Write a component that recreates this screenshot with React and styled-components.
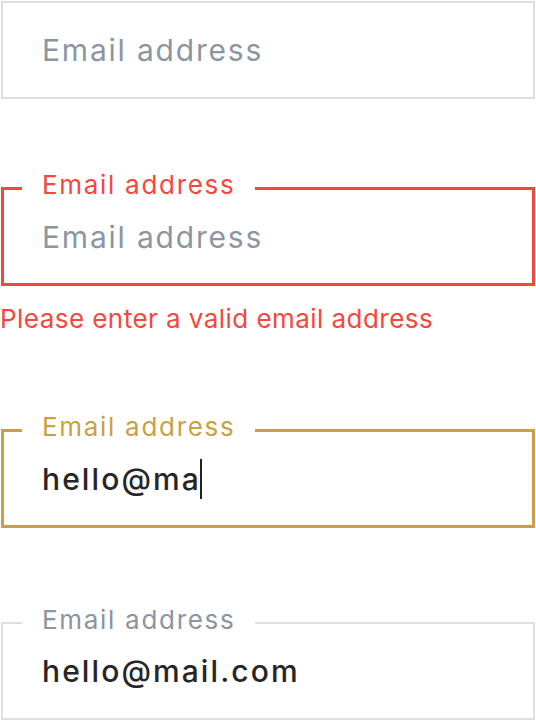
import React from 'react'
import styled, { createGlobalStyle } from 'styled-components'

const GlobalStyle = createGlobalStyle`
  html, body {
    margin: 0;
    padding: 0;
    background: #fff;
  }
  body {
    font-family: Inter, "Open Sans", sans-serif;
    -webkit-font-smoothing: antialiased;
  }
`

// border / label colours for each state of the field
const tones = {
  idle: { border: '#dedede', width: 2, label: '#8b94a1' },
  error: { border: '#f5483d', width: 3, label: '#f5483d' },
  focus: { border: '#c9a042', width: 3, label: '#c9a042' },
}

const EmailField = ({ tone = 'idle', label, value, placeholder, caret, top }) => (
  <Box $tone={tone} $top={top}>
    {label && <Label $tone={tone}>{label}</Label>}
    {value ? (
      <Value>
        {value}
        {caret && <Caret />}
      </Value>
    ) : (
      <Placeholder>{placeholder}</Placeholder>
    )}
  </Box>
)

const App = () => {
  return (
    <Page>
      <GlobalStyle />
      <EmailField top={1} placeholder='Email address' />

      <EmailField top={88} tone='error' label='Email address' placeholder='Email address' />
      <ErrorText>Please enter a valid email address</ErrorText>

      <EmailField top={95} tone='focus' label='Email address' value='hello@ma' caret />

      <EmailField top={94} label='Email address' value='hello@mail.com' />
    </Page>
  )
}

export default App

const Page = styled.div`
  width: 536px;
  display: flex;
  flex-direction: column;
`

const Box = styled.div`
  position: relative;
  box-sizing: border-box;
  height: ${(p) => (p.$tone === 'idle' ? 98 : 99)}px;
  margin: ${(p) => p.$top}px 1px 0;
  padding-left: ${(p) => 41 - tones[p.$tone].width}px;
  border: ${(p) => tones[p.$tone].width}px solid ${(p) => tones[p.$tone].border};
  display: flex;
  align-items: center;
`

const Label = styled.span`
  position: absolute;
  top: ${(p) => -(tones[p.$tone].width + 2.5) - 13}px;
  left: ${(p) => 21 - tones[p.$tone].width}px;
  padding: 0 20px;
  background: #fff;
  font-size: 26px;
  line-height: 26px;
  letter-spacing: 1.7px;
  color: ${(p) => tones[p.$tone].label};
  white-space: nowrap;
`

const Placeholder = styled.div`
  font-size: 30px;
  letter-spacing: 1.8px;
  color: #8d95a1;
  white-space: nowrap;
`

const Value = styled.div`
  display: flex;
  align-items: center;
  font-size: 30px;
  font-weight: 500;
  letter-spacing: 2.1px;
  color: #262626;
  white-space: nowrap;
`

const Caret = styled.span`
  width: 2px;
  height: 40px;
  margin-left: -1px;
  background: #222;
`

const ErrorText = styled.div`
  margin-top: 18px;
  font-size: 26px;
  line-height: 30px;
  letter-spacing: 0.45px;
  color: #f5483d;
  white-space: nowrap;
`
